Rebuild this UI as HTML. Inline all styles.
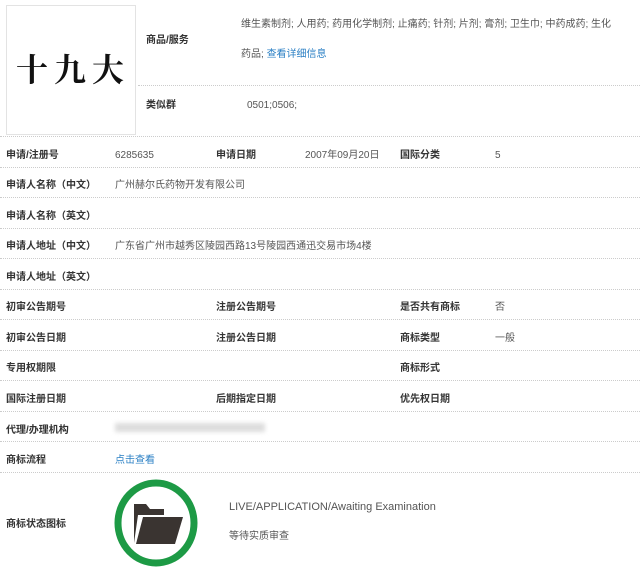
<!DOCTYPE html>
<html><head><meta charset="utf-8"><style>
body{margin:0;width:640px;height:571px;background:#fff;font-family:"Liberation Sans","Noto Sans CJK SC",sans-serif;font-size:10px;line-height:26px;color:#555;position:relative;overflow:hidden}
.a{position:absolute;white-space:nowrap}
.l{font-weight:bold;color:#333}
.sep{position:absolute;left:0;width:640px;border-top:1px dotted #ccc;height:0}
.lk{color:#2a7fc4}
</style></head><body>
<div class="a" style="left:6px;top:5px;width:130px;height:130px;border:1px solid #e3e3e3;box-sizing:border-box"></div>
<div class="a" style="left:16px;top:48px;font-family:'Noto Serif CJK SC',serif;font-size:32px;line-height:40px;font-weight:bold;color:#111;letter-spacing:6px">十九大</div>
<div class="a l" style="left:146px;top:28px">商品/服务</div>
<div class="a" style="left:241px;top:12px">维生素制剂; 人用药; 药用化学制剂; 止痛药; 针剂; 片剂; 膏剂; 卫生巾; 中药成药; 生化</div>
<div class="a" style="left:241px;top:42px">药品; <span class="lk">查看详细信息</span></div>
<div class="sep" style="top:85px;left:138px"></div>
<div class="a l" style="left:146px;top:93px">类似群</div>
<div class="a" style="left:247px;top:93px">0501;0506;</div>
<div class="sep" style="top:136px"></div>
<div class="a l" style="left:6px;top:143px">申请/注册号</div><div class="a" style="left:115px;top:143px">6285635</div>
<div class="a l" style="left:216px;top:143px">申请日期</div><div class="a" style="left:305px;top:143px">2007年09月20日</div>
<div class="a l" style="left:400px;top:143px">国际分类</div><div class="a" style="left:495px;top:143px">5</div>
<div class="sep" style="top:167px"></div>
<div class="a l" style="left:6px;top:173px">申请人名称（中文）</div><div class="a" style="left:115px;top:173px">广州赫尔氏药物开发有限公司</div>
<div class="sep" style="top:197px"></div>
<div class="a l" style="left:6px;top:204px">申请人名称（英文）</div>
<div class="sep" style="top:228px"></div>
<div class="a l" style="left:6px;top:234px">申请人地址（中文）</div><div class="a" style="left:115px;top:234px">广东省广州市越秀区陵园西路13号陵园西通迅交易市场4楼</div>
<div class="sep" style="top:258px"></div>
<div class="a l" style="left:6px;top:265px">申请人地址（英文）</div>
<div class="sep" style="top:289px"></div>
<div class="a l" style="left:6px;top:295px">初审公告期号</div><div class="a l" style="left:216px;top:295px">注册公告期号</div><div class="a l" style="left:400px;top:295px">是否共有商标</div><div class="a" style="left:495px;top:295px">否</div>
<div class="sep" style="top:319px"></div>
<div class="a l" style="left:6px;top:326px">初审公告日期</div><div class="a l" style="left:216px;top:326px">注册公告日期</div><div class="a l" style="left:400px;top:326px">商标类型</div><div class="a" style="left:495px;top:326px">一般</div>
<div class="sep" style="top:350px"></div>
<div class="a l" style="left:6px;top:356px">专用权期限</div><div class="a l" style="left:400px;top:356px">商标形式</div>
<div class="sep" style="top:380px"></div>
<div class="a l" style="left:6px;top:387px">国际注册日期</div><div class="a l" style="left:216px;top:387px">后期指定日期</div><div class="a l" style="left:400px;top:387px">优先权日期</div>
<div class="sep" style="top:411px"></div>
<div class="a l" style="left:6px;top:418px">代理/办理机构</div>
<div class="a" style="left:115px;top:423px;width:150px;height:9px;background:#ddd;filter:blur(2px)"></div>
<div class="sep" style="top:441px"></div>
<div class="a l" style="left:6px;top:448px">商标流程</div><div class="a lk" style="left:115px;top:448px">点击查看</div>
<div class="sep" style="top:472px"></div>
<div class="a l" style="left:6px;top:512px">商标状态图标</div>
<svg class="a" style="left:112px;top:478px" width="88" height="90"><ellipse cx="44" cy="45" rx="38" ry="40" fill="#fff" stroke="#1d9a45" stroke-width="7"/>
<path d="M22 26 h12 l4 5 h14 v6 h-26 l-4 28 z" fill="#3a3431"/><path d="M24 66 l7 -27 h40 l-8 27 z" fill="#3a3431"/></svg>
<div class="a" style="left:229px;top:494px;font-size:11px">LIVE/APPLICATION/Awaiting Examination</div>
<div class="a" style="left:229px;top:524px">等待实质审查</div>
</body></html>
